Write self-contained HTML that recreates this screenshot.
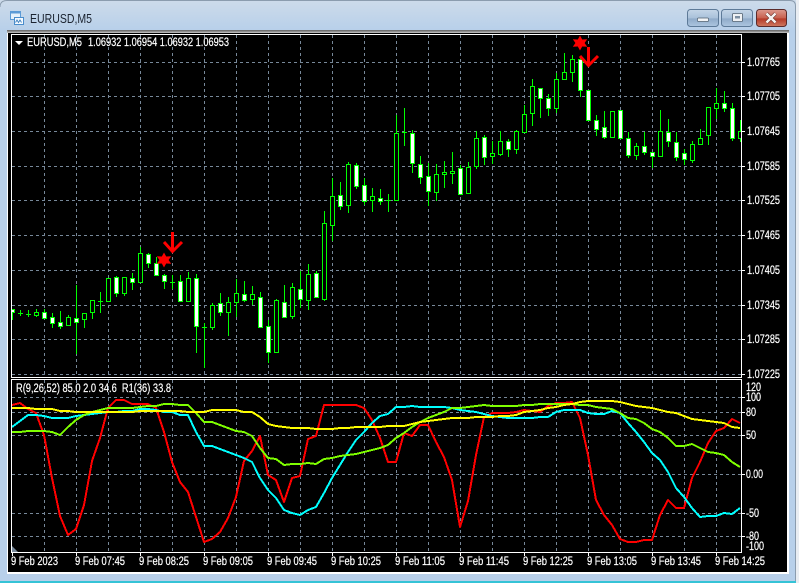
<!DOCTYPE html>
<html><head><meta charset="utf-8"><title>EURUSD,M5</title>
<style>
html,body{margin:0;padding:0;background:#e9edf2;width:799px;height:583px;overflow:hidden}
svg{display:block}
text{font-family:"Liberation Sans",sans-serif;font-size:11.5px;fill:#fff;stroke:#fff;stroke-width:.2}
.g{stroke:#778899;stroke-width:1;stroke-dasharray:3 3;fill:none;shape-rendering:crispEdges}
.c{shape-rendering:crispEdges}
</style></head><body>
<svg width="799" height="583" viewBox="0 0 799 583" xmlns="http://www.w3.org/2000/svg">
<defs>
<linearGradient id="bg" x1="0" y1="0" x2="0" y2="1"><stop offset="0" stop-color="#cddbea"/><stop offset="1" stop-color="#b8d0ea"/></linearGradient>
<linearGradient id="btn" x1="0" y1="0" x2="0" y2="1"><stop offset="0" stop-color="#c5d6e8"/><stop offset=".5" stop-color="#a9c1da"/><stop offset=".55" stop-color="#8fabc9"/><stop offset="1" stop-color="#adc6e0"/></linearGradient>
<linearGradient id="cls" x1="0" y1="0" x2="0" y2="1"><stop offset="0" stop-color="#dc9a8e"/><stop offset=".5" stop-color="#c8604e"/><stop offset=".55" stop-color="#b53a28"/><stop offset="1" stop-color="#cf7a62"/></linearGradient>
<clipPath id="mc"><rect x="12" y="35" width="729" height="342"/></clipPath>
<clipPath id="sc"><rect x="12" y="380" width="729" height="172"/></clipPath>
</defs>
<!-- window -->
<rect x="0" y="0" width="796" height="30" fill="url(#bg)"/>
<rect x="0" y="30" width="796" height="553" fill="#b8d0ea"/>
<path d="M0 7Q0 .5 7 .5H790Q795.5 .5 795.5 6V583" fill="none" stroke="#8b9cae" stroke-width="1"/>
<rect x="0" y="581" width="796" height="2" fill="#35c3d6"/>
<!-- title icon -->
<rect x="10.5" y="11.5" width="10" height="8" fill="#e8f2fb" stroke="#5d9bd6"/>
<rect x="10" y="11" width="11" height="2.5" fill="#5d9bd6"/>
<rect x="14.5" y="17.5" width="9" height="7" fill="#f5faff" stroke="#4a8dcc"/>
<path d="M15.5 22.5l1.5-2.5 1.5 2.5 1.5-2.5 1.5 2.5" fill="none" stroke="#3d7fbe" stroke-width=".9"/>
<text x="30" y="23" textLength="62" lengthAdjust="spacingAndGlyphs" style="font-size:12.5px;fill:#1b2330;stroke:none">EURUSD,M5</text>
<!-- buttons -->
<rect x="687.5" y="9.5" width="31" height="17" rx="3" fill="url(#btn)" stroke="#5d7a98"/>
<rect x="697.5" y="18" width="11" height="3.5" rx="1" fill="#f2f4f6" stroke="#50606f" stroke-width=".7"/>
<rect x="721.5" y="9.5" width="31" height="17" rx="3" fill="url(#btn)" stroke="#5d7a98"/>
<rect x="732.5" y="13.5" width="10" height="8" rx="1" fill="#eef1f4" stroke="#50606f" stroke-width=".8"/>
<rect x="735" y="16" width="5" height="2.5" fill="#7d8fa2"/>
<rect x="756.5" y="9.5" width="30" height="17" rx="3" fill="url(#cls)" stroke="#5b2b2b"/>
<path d="M766.5 13.5l9 9M775.5 13.5l-9 9" stroke="#5c2620" stroke-width="3.6" fill="none"/>
<path d="M766.5 13.5l9 9M775.5 13.5l-9 9" stroke="#f6f2f0" stroke-width="2.6" fill="none"/>
<!-- client -->
<rect x="7" y="30" width="782" height="544" fill="#fff"/>
<rect x="7" y="30" width="782" height="1" fill="#6f6f6f"/>
<rect x="7" y="31" width="782" height="1" fill="#8e8e8e"/>
<rect x="7" y="32" width="782" height="1" fill="#b5b5b5"/>
<rect x="8" y="33" width="779" height="539" fill="#000"/>
<!-- grid -->
<path class="g" d="M12 62.5H741M12 96.5H741M12 131.5H741M12 166.5H741M12 200.5H741M12 235.5H741M12 270.5H741M12 305.5H741M12 339.5H741M12 374.5H741"/>
<path class="g" d="M44.5 35V377M76.5 35V377M108.5 35V377M140.5 35V377M172.5 35V377M204.5 35V377M236.5 35V377M268.5 35V377M300.5 35V377M332.5 35V377M364.5 35V377M396.5 35V377M428.5 35V377M460.5 35V377M492.5 35V377M524.5 35V377M556.5 35V377M588.5 35V377M620.5 35V377M652.5 35V377M684.5 35V377M716.5 35V377"/>
<path class="g" d="M12 397.5H741M12 412.5H741M12 435.5H741M12 474.5H741M12 513.5H741M12 536.5H741"/>
<path class="g" d="M44.5 380V552M76.5 380V552M108.5 380V552M140.5 380V552M172.5 380V552M204.5 380V552M236.5 380V552M268.5 380V552M300.5 380V552M332.5 380V552M364.5 380V552M396.5 380V552M428.5 380V552M460.5 380V552M492.5 380V552M524.5 380V552M556.5 380V552M588.5 380V552M620.5 380V552M652.5 380V552M684.5 380V552M716.5 380V552"/>
<!-- candles -->
<g clip-path="url(#mc)" class="c" stroke="#00ff00" stroke-width="1">
<path fill="none" d="M12.5 309V320M20.5 310V316M28.5 310V317M36.5 309V317M44.5 309V319M52.5 313V328M60.5 311V329M68.5 315V325M76.5 285V354M84.5 313V328M92.5 300V319M100.5 292V313M108.5 278V301M116.5 276V297M124.5 277V296M132.5 273V290M140.5 247V282M148.5 253V268M156.5 257V275M164.5 274V289M172.5 275V289M180.5 275V302M188.5 272V302M196.5 274V353M204.5 323V368M212.5 303V330M220.5 293V316M228.5 297V336M236.5 279V317M244.5 281V302M252.5 286V305M260.5 292V327M268.5 320V363M276.5 299V352M284.5 285V317M292.5 283V319M300.5 271V308M308.5 264V310M316.5 271V297M324.5 211V301M332.5 178V241M340.5 182V210M348.5 162V213M356.5 163V189M364.5 178V205M372.5 188V212M380.5 189V205M388.5 194V212M396.5 115V200M404.5 108V146M412.5 130V173M420.5 156V184M428.5 163V206M436.5 164V201M444.5 161V188M452.5 152V184M460.5 165V194M468.5 162V193M476.5 131V169M484.5 135V165M492.5 141V164M500.5 131V156M508.5 139V157M516.5 130V154M524.5 105V132M532.5 79V126M540.5 88V118M548.5 94V116M556.5 73V113M564.5 53V79M572.5 55V82M580.5 58V97M588.5 90V120M596.5 115V136M604.5 111V139M612.5 111V137M620.5 110V138M628.5 132V158M636.5 143V160M644.5 132V155M652.5 152V168M660.5 110V157M668.5 119V147M676.5 132V161M684.5 149V165M692.5 141V163M700.5 129V144M708.5 107V145M716.5 88V119M724.5 91V112M732.5 103V141M740.5 120V142"/>
<path fill="none" d="M18 313.5h5M26 314.5h5M98 301.5h5M170 282.5h5M202 327.5h5M386 200.5h5M402 132.5h5"/>
<path fill="#000" d="M34.5 312.5h4v3h-4zM66.5 317.5h4v8h-4zM82.5 313.5h4v6h-4zM90.5 300.5h4v12h-4zM106.5 278.5h4v23h-4zM122.5 277.5h4v16h-4zM138.5 253.5h4v29h-4zM186.5 278.5h4v23h-4zM210.5 305.5h4v22h-4zM226.5 302.5h4v10h-4zM234.5 293.5h4v9h-4zM250.5 294.5h4v5h-4zM274.5 300.5h4v52h-4zM290.5 287.5h4v29h-4zM306.5 274.5h4v26h-4zM322.5 223.5h4v76h-4zM330.5 196.5h4v29h-4zM346.5 164.5h4v41h-4zM370.5 196.5h4v4h-4zM394.5 133.5h4v67h-4zM434.5 174.5h4v18h-4zM442.5 172.5h4v2h-4zM450.5 171.5h4v2h-4zM466.5 167.5h4v26h-4zM474.5 138.5h4v28h-4zM490.5 153.5h4v3h-4zM498.5 141.5h4v13h-4zM514.5 131.5h4v18h-4zM522.5 114.5h4v18h-4zM530.5 86.5h4v27h-4zM554.5 79.5h4v29h-4zM562.5 72.5h4v7h-4zM570.5 59.5h4v13h-4zM610.5 111.5h4v26h-4zM634.5 146.5h4v9h-4zM658.5 131.5h4v25h-4zM690.5 144.5h4v16h-4zM698.5 138.5h4v6h-4zM706.5 107.5h4v28h-4zM714.5 103.5h4v5h-4zM738.5 131.5h4v7h-4z"/>
<path fill="#fff" d="M10.5 309.5h4v3h-4zM42.5 312.5h4v6h-4zM50.5 317.5h4v6h-4zM58.5 322.5h4v4h-4zM74.5 318.5h4v4h-4zM114.5 277.5h4v16h-4zM130.5 278.5h4v4h-4zM146.5 254.5h4v9h-4zM154.5 263.5h4v12h-4zM162.5 275.5h4v6h-4zM178.5 281.5h4v20h-4zM194.5 278.5h4v48h-4zM218.5 303.5h4v9h-4zM242.5 294.5h4v6h-4zM258.5 297.5h4v30h-4zM266.5 326.5h4v26h-4zM282.5 302.5h4v15h-4zM298.5 289.5h4v10h-4zM314.5 273.5h4v24h-4zM338.5 195.5h4v11h-4zM354.5 165.5h4v21h-4zM362.5 185.5h4v16h-4zM378.5 198.5h4v3h-4zM410.5 133.5h4v30h-4zM418.5 164.5h4v13h-4zM426.5 176.5h4v15h-4zM458.5 168.5h4v26h-4zM482.5 137.5h4v20h-4zM506.5 141.5h4v8h-4zM538.5 88.5h4v10h-4zM546.5 98.5h4v10h-4zM578.5 59.5h4v31h-4zM586.5 90.5h4v30h-4zM594.5 120.5h4v9h-4zM602.5 127.5h4v10h-4zM618.5 110.5h4v28h-4zM626.5 138.5h4v17h-4zM642.5 146.5h4v6h-4zM650.5 152.5h4v4h-4zM666.5 132.5h4v9h-4zM674.5 142.5h4v15h-4zM682.5 153.5h4v6h-4zM722.5 103.5h4v5h-4zM730.5 108.5h4v30h-4z"/>
</g>
<!-- markers -->
<g fill="#ff0000">
<path d="M164 252.5l2.2 4 5-.3-2.6 3.8 2.6 3.8-5-.3-2.2 4-2.2-4-5 .3 2.6-3.8-2.6-3.8 5 .3z"/>
<path d="M580 35.5l2.2 4 5-.3-2.6 3.8 2.6 3.8-5-.3-2.2 4-2.2-4-5 .3 2.6-3.8-2.6-3.8 5 .3z"/>
</g>
<path d="M172.5 232V251M164 242l8.5 9.5 9.5-9.5" fill="none" stroke="#ff0000" stroke-width="3"/>
<path d="M588.5 47V66M580 56l8.5 9.5 9.5-9.5" fill="none" stroke="#ff0000" stroke-width="3"/>
<!-- indicator lines -->
<g clip-path="url(#sc)" fill="none" stroke-width="2" stroke-linejoin="round" class="c">
<polyline stroke="#ff0000" points="12,405 20,403 28,409 36,413 44,435 52,478 60,516 68,535 76,529 84,505 92,461 100,438 108,408 116,400 124,400 132,404 140,404 148,404 156,408 164,432 172,462 180,482 188,492 196,517 204,542 212,539 220,532 228,518 236,497 244,461 252,451 260,436 268,475 276,480 284,502 292,478 300,476 308,439 316,436 324,405 332,405 340,405 348,405 356,405 364,408 372,420 380,438 388,462 396,462 404,433 412,436 420,425 428,425 436,442 444,457 452,480 460,527 468,501 476,455 484,417 492,413 500,413 508,413 516,412 524,410 532,411 540,412 548,406 556,403 564,403 572,402 580,418 588,455 596,500 604,515 612,525 620,539 628,542 636,542 644,540 652,540 660,515 668,500 676,508 684,508 692,478 700,462 708,443 716,431 724,428 732,419 740,423"/>
<polyline stroke="#00ffff" points="12,427 20,421 28,415 36,415 44,416 52,418 60,418 68,418 76,416 84,415 92,414 100,413 108,412 116,412 124,411 132,411 140,409 148,409 156,410 164,412 172,412 180,415 188,415 196,432 204,446 212,446 220,449 228,452 236,455 244,458 252,462 260,478 268,490 276,498 284,510 292,513 300,515 308,510 316,507 324,493 332,478 340,465 348,452 356,440 364,432 372,423 380,416 388,414 396,407 404,407 412,406 420,407 428,407 436,407 444,407 452,408 460,410 468,411 476,412 484,414 492,416 500,417 508,418 516,418 524,418 532,418 540,417 548,417 556,412 564,410 572,410 580,410 588,413 596,414 604,414 612,411 620,413 628,423 636,432 644,442 652,453 660,460 668,472 676,488 684,497 692,508 700,517 708,516 716,516 724,513 732,514 740,508"/>
<polyline stroke="#7fff00" points="12,432 20,432 28,431 36,431 44,431 52,432 60,435 68,427 76,420 84,415 92,412 100,410 108,408 116,408 124,408 132,408 140,407 148,406 156,406 164,404 172,404 180,405 188,405 196,413 204,422 212,422 220,425 228,428 236,431 244,432 252,436 260,448 268,458 276,459 284,465 292,464 300,464 308,463 316,464 324,459 332,458 340,456 348,455 356,454 364,452 372,450 380,448 388,445 396,438 404,433 412,427 420,422 428,418 436,415 444,412 452,408 460,408 468,407 476,406 484,405 492,406 500,406 508,406 516,406 524,405 532,405 540,404 548,404 556,404 564,404 572,404 580,405 588,405 596,407 604,408 612,409 620,413 628,418 636,419 644,423 652,429 660,432 668,438 676,446 684,446 692,444 700,448 708,452 716,453 724,455 732,462 740,467"/>
<polyline stroke="#ffff00" points="12,408 20,408 28,408 36,409 44,409 52,409 60,411 68,411 76,412 84,412 92,412 100,412 108,412 116,412 124,412 132,412 140,411 148,411 156,411 164,411 172,411 180,411 188,412 196,412 204,412 212,410 220,410 228,410 236,410 244,412 252,412 260,417 268,424 276,426 284,427 292,428 300,428 308,428 316,429 324,429 332,429 340,428 348,428 356,427 364,427 372,427 380,427 388,426 396,426 404,426 412,424 420,422 428,421 436,420 444,419 452,418 460,418 468,418 476,417 484,417 492,417 500,416 508,416 516,415 524,412 532,411 540,410 548,408 556,407 564,405 572,404 580,402 588,401 596,401 604,401 612,401 620,402 628,404 636,406 644,407 652,408 660,410 668,412 676,413 684,416 692,419 700,420 708,421 716,422 724,423 732,427 740,428"/>
</g>
<!-- corner triangle -->
<path d="M12 546L18 552H12z" fill="#778899"/>
<!-- frames -->
<g fill="none" stroke="#fff" stroke-width="1" class="c">
<rect x="11.5" y="34.5" width="730" height="343"/>
<rect x="11.5" y="379.5" width="730" height="173"/>
<path d="M742 62.5h3M742 96.5h3M742 131.5h3M742 166.5h3M742 200.5h3M742 235.5h3M742 270.5h3M742 305.5h3M742 339.5h3M742 374.5h3"/>
<path d="M742 397.5h3M742 412.5h3M742 435.5h3M742 474.5h3M742 513.5h3M742 536.5h3"/>
<path d="M12.5 553v3M76.5 553v3M140.5 553v3M204.5 553v3M268.5 553v3M332.5 553v3M396.5 553v3M460.5 553v3M524.5 553v3M588.5 553v3M652.5 553v3M716.5 553v3"/>
</g>
<!-- header texts -->
<path d="M15 41h8l-4 4z" fill="#fff"/>
<text x="27" y="46" textLength="55" lengthAdjust="spacingAndGlyphs">EURUSD,M5</text>
<text x="88" y="46" textLength="141" lengthAdjust="spacingAndGlyphs">1.06932 1.06954 1.06932 1.06953</text>
<text x="16" y="392" textLength="155" lengthAdjust="spacingAndGlyphs" xml:space="preserve">R(9,26,52) 85.0 2.0 34.6  R1(36) 33.8</text>
<!-- price labels -->
<g>
<text x="747" y="66" textLength="33" lengthAdjust="spacingAndGlyphs">1.07765</text>
<text x="747" y="100" textLength="33" lengthAdjust="spacingAndGlyphs">1.07705</text>
<text x="747" y="135" textLength="33" lengthAdjust="spacingAndGlyphs">1.07645</text>
<text x="747" y="170" textLength="33" lengthAdjust="spacingAndGlyphs">1.07585</text>
<text x="747" y="204" textLength="33" lengthAdjust="spacingAndGlyphs">1.07525</text>
<text x="747" y="239" textLength="33" lengthAdjust="spacingAndGlyphs">1.07465</text>
<text x="747" y="274" textLength="33" lengthAdjust="spacingAndGlyphs">1.07405</text>
<text x="747" y="309" textLength="33" lengthAdjust="spacingAndGlyphs">1.07345</text>
<text x="747" y="343" textLength="33" lengthAdjust="spacingAndGlyphs">1.07285</text>
<text x="747" y="378" textLength="33" lengthAdjust="spacingAndGlyphs">1.07225</text>
<text x="746" y="391" textLength="15" lengthAdjust="spacingAndGlyphs">120</text>
<text x="746" y="401" textLength="15" lengthAdjust="spacingAndGlyphs">100</text>
<text x="746" y="416" textLength="10" lengthAdjust="spacingAndGlyphs">80</text>
<text x="746" y="439" textLength="10" lengthAdjust="spacingAndGlyphs">50</text>
<text x="746" y="478" textLength="17" lengthAdjust="spacingAndGlyphs">0.00</text>
<text x="746" y="517" textLength="13" lengthAdjust="spacingAndGlyphs">-50</text>
<text x="746" y="540" textLength="13" lengthAdjust="spacingAndGlyphs">-80</text>
<text x="746" y="550" textLength="18" lengthAdjust="spacingAndGlyphs">-100</text>
</g>
<!-- time labels -->
<g>
<text x="11" y="565" textLength="47" lengthAdjust="spacingAndGlyphs">9 Feb 2023</text>
<text x="75" y="565" textLength="50" lengthAdjust="spacingAndGlyphs">9 Feb 07:45</text>
<text x="139" y="565" textLength="50" lengthAdjust="spacingAndGlyphs">9 Feb 08:25</text>
<text x="203" y="565" textLength="50" lengthAdjust="spacingAndGlyphs">9 Feb 09:05</text>
<text x="267" y="565" textLength="50" lengthAdjust="spacingAndGlyphs">9 Feb 09:45</text>
<text x="331" y="565" textLength="50" lengthAdjust="spacingAndGlyphs">9 Feb 10:25</text>
<text x="395" y="565" textLength="50" lengthAdjust="spacingAndGlyphs">9 Feb 11:05</text>
<text x="459" y="565" textLength="50" lengthAdjust="spacingAndGlyphs">9 Feb 11:45</text>
<text x="523" y="565" textLength="50" lengthAdjust="spacingAndGlyphs">9 Feb 12:25</text>
<text x="587" y="565" textLength="50" lengthAdjust="spacingAndGlyphs">9 Feb 13:05</text>
<text x="651" y="565" textLength="50" lengthAdjust="spacingAndGlyphs">9 Feb 13:45</text>
<text x="715" y="565" textLength="50" lengthAdjust="spacingAndGlyphs">9 Feb 14:25</text>
</g>
</svg>
</body></html>
